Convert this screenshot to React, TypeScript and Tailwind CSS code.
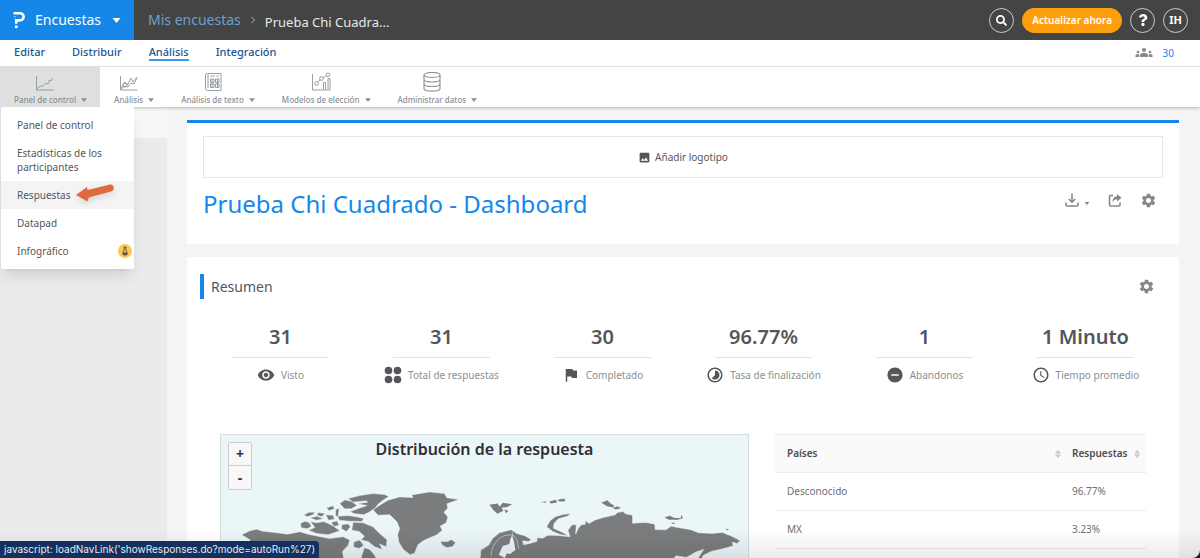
import type { ReactNode } from "react";
import { FaQuestion, FaSearch } from "react-icons/fa";
import { MdAccessTime, MdFlag, MdImage, MdRemoveCircle, MdSettings, MdTimelapse, MdVisibility } from "react-icons/md";

const Caret = ({ className = "" }: { className?: string }) => (
  <svg viewBox="0 0 8 5" className={className} fill="currentColor" aria-hidden="true"><path d="M0 0h8L4 5z" /></svg>
);

const Logo = () => (
  <svg viewBox="0 0 12 18" className="h-[18px] w-3" fill="none" stroke="#fff" strokeWidth="2.6" aria-hidden="true">
    <path d="M.5 2.2H7a3.6 3.6 0 0 1 0 7.2H3.2v3.4" />
    <path d="M1.900 15.800h2.700" />
    <path d="M.5 5.8H3" strokeWidth="1" opacity=".6" />
  </svg>
);

const LineIcon = ({ children }: { children: ReactNode }) => (
  <svg viewBox="0 0 20 20" className="size-5" fill="none" stroke="#8f959b" strokeWidth="0.9" strokeLinejoin="round" aria-hidden="true">{children}</svg>
);

const toolbar = [
  {
    label: "Panel de control", active: true,
    icon: <LineIcon><path d="M1.5 4v14h17M2 16.500l3.500-2.500 2 .5L10 11.500l3 .5 1.500-4 1.500 1 2-3" /></LineIcon>,
  },
  {
    label: "Análisis",
    icon: <LineIcon><path d="M1.500 4v14h17M2 16l4-6 2.500 3 3.500-7 2 4 4-5M2 17l4-3 3 1 3-4 3 1 3-6" /><circle cx="6" cy="13" r="2" /></LineIcon>,
  },
  {
    label: "Análisis de texto",
    icon: <LineIcon><path d="M5 1.500h13v17H4.500c-1.500 0-2-.8-2-2v-14c0-1.200 2.500-1.200 2.500 0v14M7.500 4H12M13.500 4H16M7.500 7h3.500v3.500H7.500zM12.500 7H16v3.500h-3.500zM7.500 12h3.500v3.500H7.500zM12.500 12H16v3.500h-3.500zM9 7v8M14.500 7v8" /></LineIcon>,
  },
  {
    label: "Modelos de elección",
    icon: (
      <LineIcon>
        <path d="M1.500 2v16h18M6.800 10l2.400-2.300M12 6l3.400-2.500M12.500 17.500v-7h2v7M17 17.500v-11h2v11" />
        <circle cx="5.500" cy="11.500" r="1.900" /><circle cx="10.500" cy="6.500" r="1.900" /><circle cx="17" cy="2.800" r="1.800" />
      </LineIcon>
    ),
  },
  {
    label: "Administrar datos",
    icon: (
      <LineIcon>
        <g strokeWidth="1.2">
          <ellipse cx="10" cy="3" rx="8" ry="2.500" />
          <path d="M2 3v13.500c0 3.500 16 3.500 16 0V3M2 7.500c0 3.300 16 3.300 16 0M2 12c0 3.300 16 3.300 16 0" />
        </g>
      </LineIcon>
    ),
  },
];

const menu = ["Panel de control", "Estadísticas de los participantes", "Respuestas", "Datapad", "Infográfico"];

const Dots = () => (
  <svg viewBox="0 0 18 18" className="size-[18px]" fill="currentColor" aria-hidden="true">
    <circle cx="4.500" cy="4.500" r="3.800" /><circle cx="13.500" cy="4.500" r="3.800" />
    <circle cx="4.500" cy="13.500" r="3.800" /><circle cx="13.500" cy="13.500" r="3.800" />
  </svg>
);

const stats = [
  { value: "31", label: "Visto", icon: <MdVisibility size={18} /> },
  { value: "31", label: "Total de respuestas", icon: <Dots /> },
  { value: "30", label: "Completado", icon: <MdFlag size={18} /> },
  { value: "96.77%", label: "Tasa de finalización", icon: <MdTimelapse size={18} /> },
  { value: "1", label: "Abandonos", icon: <MdRemoveCircle size={18} /> },
  { value: "1 Minuto", label: "Tiempo promedio", icon: <MdAccessTime size={18} /> },
];

const rows = [
  { country: "Desconocido", share: "96.77%" },
  { country: "MX", share: "3.23%" },
];

const Header = () => (
  <header className="flex h-10 shrink-0 items-center bg-[#444] text-white">
    <button className="flex h-full w-[134px] shrink-0 items-center bg-[#1587e9] pl-[13px] text-sm">
      <Logo />
      <span className="ml-2.5">Encuestas</span>
      <Caret className="ml-[11px] h-[5px] w-[9px]" />
    </button>
    <nav className="ml-3.5 flex items-center text-sm">
      <a href="#encuestas" className="text-[#6d9fcd]">Mis encuestas</a>
      <svg viewBox="0 0 6 10" className="mx-[9px] h-2 w-1.5" fill="none" stroke="#8b8b8b" strokeWidth="1.5" aria-hidden="true"><path d="M1 1l4 4-4 4" /></svg>
      <span className="pt-1 text-[13px] text-[#e8e8e8]">Prueba Chi Cuadra...</span>
    </nav>
    <div className="ml-auto flex items-center gap-2 pr-3">
      <button aria-label="Buscar" className="grid size-[25px] place-items-center rounded-full border border-[#ccc]"><FaSearch size={11} /></button>
      <button className="h-[25px] rounded-full bg-[#ff9e0d] px-2.5 text-[10px] font-semibold">Actualizar ahora</button>
      <button aria-label="Ayuda" className="grid size-[25px] place-items-center rounded-full border border-[#ccc]"><FaQuestion size={12} /></button>
      <button className="grid size-[25px] place-items-center rounded-full border border-[#ccc] text-[11px] font-bold">IH</button>
    </div>
  </header>
);

const Tabs = () => (
  <div className="flex h-[27px] shrink-0 items-center border-b border-[#ebebeb] bg-white pr-[26px] pl-3.5">
    <nav className="flex gap-[27px] text-[11px] leading-[14px] font-medium text-[#21558f]">
      <a href="#editar">Editar</a>
      <a href="#distribuir">Distribuir</a>
      <a href="#analisis" className="border-b-2 border-[#3f96ea]">Análisis</a>
      <a href="#integracion">Integración</a>
    </nav>
    <div className="ml-auto flex items-center gap-2.5 text-[10px] text-[#1587e9]">
      <svg viewBox="0 0 18 10" className="h-2.5 w-[18px]" fill="#85888b" aria-hidden="true">
        <circle cx="9" cy="2" r="2" /><path d="M5 9V7.500C5 5.500 7 5 9 5s4 .5 4 2.500V9z" />
        <circle cx="3" cy="4" r="1.300" /><path d="M.5 9V7.500C.5 6.300 2 6 4.300 6.300L4 9z" />
        <circle cx="15" cy="4" r="1.300" /><path d="M17.500 9V7.500c0-1.200-1.500-1.500-3.800-1.200L14 9z" />
      </svg>
      30
    </div>
  </div>
);

const DropMenu = () => (
  <ul className="absolute top-full left-0 z-10 w-[134px] border-l border-[#ddd] bg-white py-1 text-[10px] leading-[14px] text-[#54565a] shadow-lg">
    {menu.map((item) => (
      <li key={item} className={item === "Respuestas" ? "relative bg-[#f4f4f4]" : "relative"}>
        <a href="#menu" className="block py-[7px] pr-6 pl-4">{item}</a>
        {item === "Respuestas" && (
          <svg viewBox="0 0 42 20" className="absolute top-0.5 left-[73px] h-5 w-[42px] drop-shadow-md" aria-hidden="true">
            <path d="M2 12 13 4l.5 3L36 1.500c4-.5 5.500 5.500 1 7L14.800 14.500l-1.300 4z" fill="#e06a40" />
          </svg>
        )}
        {item === "Infográfico" && (
          <span className="absolute top-[7px] right-0.5 grid size-3.5 place-items-center rounded-full bg-[#fcca53]">
            <svg viewBox="0 0 10 12" className="h-2.5 w-2" fill="none" stroke="#4a4a4a" strokeWidth="1.100" aria-hidden="true">
              <path d="M3.500 1h3M4 1v4L2.500 7.500C1.800 9.500 2 11 4 11h2c2 0 2.200-1.500 1.500-3.500L6 5V1" /><path d="M3 8.500h4v1.500H3z" fill="#4a4a4a" />
            </svg>
          </span>
        )}
      </li>
    ))}
  </ul>
);

const Toolbar = () => (
  <div className="relative z-10 flex h-10 shrink-0 bg-white shadow-[0_1px_3px_rgba(0,0,0,0.25)]">
    {toolbar.map((t) => (
      <button key={t.label} className={t.active ? "flex items-end gap-[5px] bg-[#dedfdf] pr-[13px] pb-px pl-3.5 text-[#8b9094]" : "flex items-end gap-[5px] pr-[13px] pb-px pl-3.5 text-[#8b9094]"}>
        <span className="flex flex-col items-center text-[8px] leading-3 font-medium whitespace-nowrap">
          <span className="mb-0.5">{t.icon}</span>
          {t.label}
        </span>
        <Caret className="mb-1 h-1 w-1.5" />
      </button>
    ))}
    <DropMenu />
  </div>
);

const TitleCard = () => (
  <section className="border-t-[3px] border-[#1587e9] bg-white px-4 pt-[13px] pb-6">
    <button className="flex h-[42px] w-full items-center justify-center gap-1 border border-[#e6e6e6] text-[10px] text-[#54565a]">
      <MdImage size={13} /> Añadir logotipo
    </button>
    <div className="mt-2.5 flex items-center">
      <h1 className="text-2xl leading-8 text-[#1587e9]">Prueba Chi Cuadrado - Dashboard</h1>
      <div className="ml-auto flex items-center gap-[18px] pr-1.5 pb-2 text-[#85888b]">
        <button aria-label="Descargar" className="flex items-end gap-[5px]">
          <svg viewBox="0 0 14 14" className="size-3.5" fill="none" stroke="currentColor" strokeWidth="1.600" aria-hidden="true"><path d="M7 .5v8.500M3.800 6 7 9.200 10.200 6M1 9.500V12q0 1 1 1h10q1 0 1-1V9.500" /></svg>
          <Caret className="mb-0.5 h-[3px] w-1.5" />
        </button>
        <button aria-label="Compartir">
          <svg viewBox="0 0 14 14" className="size-3.5" aria-hidden="true">
            <path d="M5 2.500H2.500q-1 0-1 1V12q0 1 1 1H11q1 0 1-1V9.500" fill="none" stroke="currentColor" strokeWidth="1.600" />
            <path d="M9 1l4.500 3.800L9 8.500V6.300C6.500 6.300 5.500 7.500 4.500 9.500 4.500 6 6 3.500 9 3.300z" fill="currentColor" />
          </svg>
        </button>
        <button aria-label="Ajustes"><MdSettings size={17} /></button>
      </div>
    </div>
  </section>
);

const Stats = () => (
  <div className="mt-6 grid grid-cols-6">
    {stats.map((s) => (
      <div key={s.label} className="flex flex-col items-center">
        <div className="text-xl leading-7 font-semibold text-[#54565a]">{s.value}</div>
        <div className="mt-1.5 h-px w-3/5 bg-[#e3e3e3]" />
        <div className="mt-[7px] flex items-center gap-1.5 text-[10px] leading-5 whitespace-nowrap text-[#8b8f93]">
          <span className="text-[#54565a]">{s.icon}</span>
          {s.label}
        </div>
      </div>
    ))}
  </div>
);

const WorldMap = () => (
  <svg viewBox="0 0 528 132" className="block w-full" fill="#7b7c7e" stroke="#ebf6f9" strokeWidth="1.500" strokeLinejoin="round" aria-hidden="true">
    <g transform="translate(-21 -10) scale(.3333)">
      {/* Alaska and northern Canada */}
      <path d="M125 330 150 318 170 313 188 319 232 324 262 328 300 321 325 328 358 335 390 341 430 336 450 346 445 362 428 380 432 400 450 425H125l25-80z" />
      <path d="M302 296 315 289 328 293 335 305 322 312 304 309z" />
      <path d="M312 270 328 262 345 262 340 270 322 276z" />
      <path d="M332 290 350 294 372 290 400 303 420 318 385 330 350 326 326 316 345 308z" />
      <path d="M330 279 352 274 370 282 350 286zM354 263 376 266 366 276 352 271zM380 249 400 243 404 252 388 258zM378 270 400 271 404 283 386 286zM408 254 418 250 415 278 407 271zM394 293 412 288 418 302 403 304z" />
      <path d="M414 274 445 272 470 276 492 281 487 290 448 289 418 286z" />
      <path d="M420 236 436 225 456 230 472 242 455 252 434 252z" />
      <path d="M445 221 480 212 520 206 555 209 567 215 550 226 535 238 526 250 508 262 492 270 462 266 452 260 478 250 502 242 472 237 504 232 500 228 460 232z" />
      {/* Baffin island */}
      <path d="M426 300 445 297 452 306 440 320 425 312zM460 292 490 294 520 306 540 326 562 345 560 366 540 358 548 374 525 366 505 350 485 346 494 334 478 320 456 316zM462 352 480 346 492 362 478 371 462 367z" />
      <path d="M494 369 510 374 522 388 545 425 480 425 486 392z" />
      {/* Greenland and Iceland */}
      <path d="M520 255 545 238 565 226 600 216 640 218 636 210 690 201 735 206 742 219 778 224 742 237 745 250 733 262 745 276 740 294 722 304 728 316 712 330 672 347 655 360 645 385 632 390 612 375 598 353 594 330 600 311 592 291 570 270 535 271z" />
      <path d="M722 350 745 350 755 344 768 353 760 365 742 369 728 361z" />
    </g>
    <g transform="translate(259 -10) scale(.3333)">
      {/* Svalbard and the Arctic islands */}
      <path d="M30 240 55 236 60 246 70 234 98 238 82 247 66 248 72 258 54 267 42 256zM74 254 87 258 80 265zM183 232 200 229 201 233zM210 230 230 225 233 233 214 236zM235 225 255 221 258 229 240 230zM366 234 384 226 394 236 405 242 402 248 384 244zM400 250 415 244 425 250 410 254zM556 278 572 273 584 279 604 280 608 270 611 280 596 285 570 285zM574 294 588 294 584 298zM738 312 750 313 745 316z" stroke="none" />
      {/* Novaya Zemlya */}
      <path d="M202 306 212 288 228 276 250 269 273 266 265 274 237 282 224 296 222 310 250 323 267 333 242 329 220 320z" />
      {/* Eurasia */}
      <path d="M4 376 28 361 40 340 60 324 95 315 112 326 136 333 155 344 148 350 130 348 132 360 148 357 172 350 174 339 190 340 206 331 235 332 272 336 266 316 278 300 291 300 289 328 297 310 306 300 318 298 318 288 330 296 346 286 372 278 408 270 414 263 432 260 438 267 460 271 460 295 500 293 527 298 528 314 560 315 576 304 596 308 636 315 658 324 700 326 730 323 760 335 784 348 774 356 760 352 762 364 728 373 696 380 672 392 660 425 642 425 662 392 674 374 650 382 622 398 590 393 570 425 0 425z" />
      <path d="M62 380 70 364 90 358 92 344 98 332 104 352 108 376 92 388 82 386 76 400 58 390z" fill="#ebf6f9" stroke="none" />
      <path d="M34 395 40 365 58 342 76 332 100 330 112 345 118 372M98 322l4 14" fill="none" />
    </g>
  </svg>
);

const MapPanel = () => (
  <div className="relative flex-1 border border-[#d5dadd] bg-[#ebf6f9]">
    <h3 className="absolute inset-x-0 top-1 text-center text-base leading-5 font-semibold text-[#2f2f33]">Distribución de la respuesta</h3>
    <div className="absolute top-[7px] left-[7px] flex w-6 flex-col rounded-xs border border-[#ccc] bg-[#f8f8f8] text-sm font-bold text-[#333]">
      <button className="h-[23px] border-b border-[#ccc]" aria-label="Acercar">+</button>
      <button className="h-[23px]" aria-label="Alejar">-</button>
    </div>
    <WorldMap />
  </div>
);

const Sort = () => (
  <svg viewBox="0 0 6 8" className="h-2 w-1.5 shrink-0" fill="#c4c8cb" aria-hidden="true"><path d="M0 3.500 3 0l3 3.500zM0 4.500h6L3 8z" /></svg>
);

const CountryTable = () => (
  <table className="w-[371px] self-start text-left text-[10px] text-[#6c7075]">
    <thead>
      <tr className="h-[38px] border-y border-[#ececec] bg-[#fafafa] text-[#4a4c50]">
        <th className="pl-3 font-semibold"><span className="flex items-center justify-between pr-[11px]">Países <Sort /></span></th>
        <th className="w-[74px] font-semibold"><span className="flex items-center justify-between pr-1.5">Respuestas <Sort /></span></th>
      </tr>
    </thead>
    <tbody>
      {rows.map((r) => (
        <tr key={r.country} className="h-[38px] border-b border-[#ececec]">
          <td className="pl-3">{r.country}</td>
          <td>{r.share}</td>
        </tr>
      ))}
    </tbody>
  </table>
);

export default function App() {
  return (
    <div className="h-screen bg-[#222]">
      <div className="relative flex h-full flex-col overflow-hidden rounded-br-lg bg-[#f4f4f4] font-['Noto_Sans','Open_Sans',sans-serif]">
        <Header />
        <Tabs />
        <Toolbar />
        <div className="flex min-h-0 flex-1">
          <aside className="w-[167px] shrink-0 bg-[#ebebeb]"><div className="h-[31px] bg-[#f7f7f7]" /></aside>
          <main className="min-w-0 flex-1 overflow-hidden pt-[13px] pr-[21px] pl-5">
            <TitleCard />
            <section className="mt-[13px] bg-white px-[13px] pt-[17px] pb-6">
              <div className="flex items-center pr-[11px]">
                <h2 className="border-l-4 border-[#1587e9] pl-[7px] text-sm leading-[25px] text-[#54565a]">Resumen</h2>
                <button className="ml-auto text-[#85888b]" aria-label="Ajustes del resumen"><MdSettings size={17} /></button>
              </div>
              <Stats />
              <div className="mt-[49px] flex gap-[26px] px-5">
                <MapPanel />
                <CountryTable />
              </div>
            </section>
          </main>
        </div>
        <div className="pointer-events-none absolute inset-x-0 bottom-0 h-7 bg-linear-to-b from-transparent to-black/8" />
        <div className="absolute bottom-0 left-0 z-20 rounded-tr-sm bg-[#12315f] px-1 font-[Inter,sans-serif] text-[10px] leading-[17px] text-[#e6ebf2]">
          javascript: loadNavLink('showResponses.do?mode=autoRun%27)
        </div>
      </div>
    </div>
  );
}
